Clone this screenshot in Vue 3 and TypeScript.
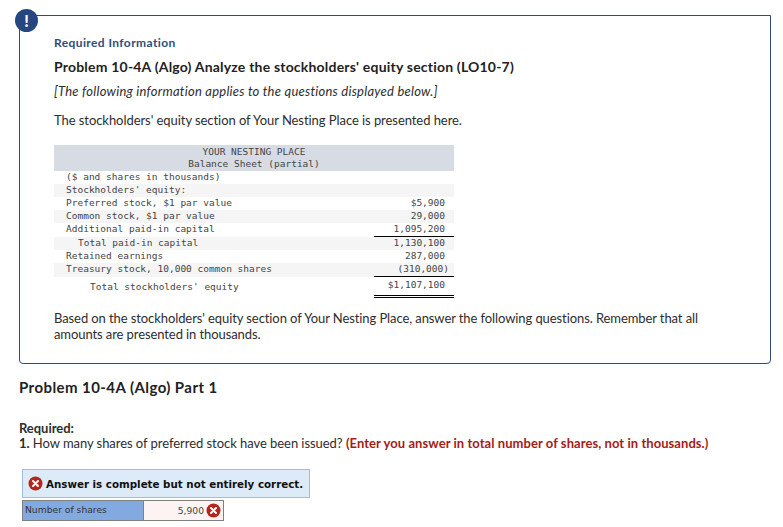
<script setup lang="ts">
interface Row { label: string; value: string; indent?: number; stripe?: boolean; line?: boolean }
const rows: Row[] = [
  { label: '($ and shares in thousands)', value: '' },
  { label: "Stockholders' equity:", value: '', stripe: true },
  { label: 'Preferred stock, $1 par value', value: '$5,900' },
  { label: 'Common stock, $1 par value', value: '29,000', stripe: true },
  { label: 'Additional paid-in capital', value: '1,095,200', line: true },
  { label: 'Total paid-in capital', value: '1,130,100', indent: 1, stripe: true },
  { label: 'Retained earnings', value: '287,000' },
  { label: 'Treasury stock, 10,000 common shares', value: '(310,000)', stripe: true, line: true },
]
</script>

<template>
  <main class="page">
    <section class="box">
      <span class="badge">!</span>
      <h2 class="req">Required Information</h2>
      <h3 class="title">Problem 10-4A (Algo) Analyze the stockholders' equity section (LO10-7)</h3>
      <p class="note">[The following information applies to the questions displayed below.]</p>
      <p class="intro">The stockholders' equity section of Your Nesting Place is presented here.</p>
      <div class="sheet">
        <div class="head">YOUR NESTING PLACE<br />Balance Sheet (partial)</div>
        <div v-for="r in rows" :key="r.label" class="row" :class="{ stripe: r.stripe, ruled: r.line }">
          <span class="lab" :class="{ ind: r.indent }">{{ r.label }}</span>
          <span class="val" :class="{ line: r.line, paren: r.value.startsWith('(') }">{{ r.value }}</span>
        </div>
        <div class="row total">
          <span class="lab ind2">Total stockholders' equity</span>
          <span class="val dbl">$1,107,100</span>
        </div>
      </div>
      <p class="based">Based on the stockholders' equity section of Your Nesting Place, answer the following questions. Remember that all amounts are presented in thousands.</p>
    </section>
    <h3 class="part">Problem 10-4A (Algo) Part 1</h3>
    <p class="required"><b>Required:</b><br /><b>1.</b> How many shares of preferred stock have been issued? <b class="red">(Enter you answer in total number of shares, not in thousands.)</b></p>
    <div class="status">
      <svg class="x" width="15" height="15" viewBox="0 0 15 15"><circle cx="7.5" cy="7.5" r="7" fill="#b3261e" /><path d="M5 5l5 5M10 5l-5 5" stroke="#fff" stroke-width="2" stroke-linecap="round" /></svg>
      <span>Answer is complete but not entirely correct.</span>
    </div>
    <div class="answer">
      <div class="ans-l">Number of shares</div>
      <div class="ans-r">
        <span>5,900</span>
        <svg width="15" height="15" viewBox="0 0 15 15"><circle cx="7.5" cy="7.5" r="7" fill="#b3261e" /><path d="M5 5l5 5M10 5l-5 5" stroke="#fff" stroke-width="2" stroke-linecap="round" /></svg>
      </div>
    </div>
  </main>
</template>

<style scoped>
.page {
  width: 783px;
  height: 527px;
  box-sizing: border-box;
  padding: 15px 12px 0 19px;
  overflow: hidden;
  font-family: Lato, "Open Sans", sans-serif;
  font-size: 13px;
  color: #2d2d2d;
  background: #fff;
}
.box {
  position: relative;
  box-sizing: border-box;
  height: 349px;
  border: 1px solid #2a4a80;
  border-radius: 0 0 4px 4px;
  padding: 19px 20px 0 34px;
}
.badge {
  position: absolute;
  left: -5px;
  top: -7px;
  width: 23px;
  height: 23px;
  border-radius: 50%;
  background: #24477f;
  color: #fff;
  font-weight: 900;
  font-size: 16px;
  line-height: 23px;
  text-align: center;
}
h2, h3, p { margin: 0; }
.req { font-size: 12px; line-height: 16px; font-weight: 700; color: #2f4d7e; letter-spacing: 0.4px; }
.title { margin-top: 8px; font-size: 14px; line-height: 16px; font-weight: 700; color: #222; letter-spacing: 0.2px; }
.note { margin-top: 8px; font-style: italic; line-height: 16px; letter-spacing: 0.24px; }
.intro { margin-top: 13px; line-height: 16px; letter-spacing: -0.06px; }
.sheet {
  margin-top: 17px;
  width: 400px;
  font-family: "DejaVu Sans Mono", monospace;
  font-size: 9.5px;
  line-height: 12px;
  color: #444;
}
.head { box-sizing: border-box; height: 26px; padding-top: 1px; background: #d7dbe4; text-align: center; }
.row { display: flex; justify-content: space-between; height: 13px; }
.row.ruled { height: 14px; }
.stripe { background: #f5f5f5; }
.lab { padding-left: 12px; white-space: pre; }
.ind { padding-left: 24px; }
.ind2 { padding-left: 36px; }
.val {
  box-sizing: border-box;
  width: 80px;
  padding-right: 9px;
  text-align: right;
  white-space: pre;
}
.val.paren { padding-right: 5px; }
.val.line { border-bottom: 1px solid #000; }
.total { height: 21px; }
.total .lab { padding-top: 4px; }
.val.dbl { padding-top: 2px; border-bottom: 3px double #000; }
.based { margin-top: 12px; line-height: 16px; letter-spacing: -0.09px; width: 680px; }
.part { margin-top: 14px; font-size: 15px; line-height: 18px; font-weight: 700; color: #222; letter-spacing: 0.43px; }
.required { margin-top: 25px; line-height: 15px; font-size: 13px; letter-spacing: -0.05px; }
.required b { font-weight: 700; }
.required .red { color: #a61c14; letter-spacing: 0.06px; }
.status {
  display: flex;
  align-items: center;
  gap: 3px;
  box-sizing: border-box;
  width: 288px;
  height: 29px;
  margin: 18px 0 0 3px;
  padding-left: 5px;
  background: #ddeaf7;
  border: 1px solid #a3bedb;
  font-family: "DejaVu Sans", sans-serif;
  font-size: 10.3px;
  font-weight: 700;
  color: #111;
  white-space: nowrap;
}
.answer {
  display: flex;
  box-sizing: border-box;
  width: 202px;
  height: 21px;
  margin: 2px 0 0 3px;
  border: 1px solid #808080;
  font-family: "DejaVu Sans", sans-serif;
  font-size: 9.2px;
}
.ans-l {
  width: 118px;
  padding-left: 2px;
  line-height: 18px;
  background: #82aae0;
  border-right: 1px solid #808080;
  color: #333;
}
.ans-r {
  flex: 1;
  display: flex;
  align-items: center;
  justify-content: flex-end;
  gap: 2px;
  padding-right: 2px;
  background: #fdf3f2;
  color: #444;
}
</style>
